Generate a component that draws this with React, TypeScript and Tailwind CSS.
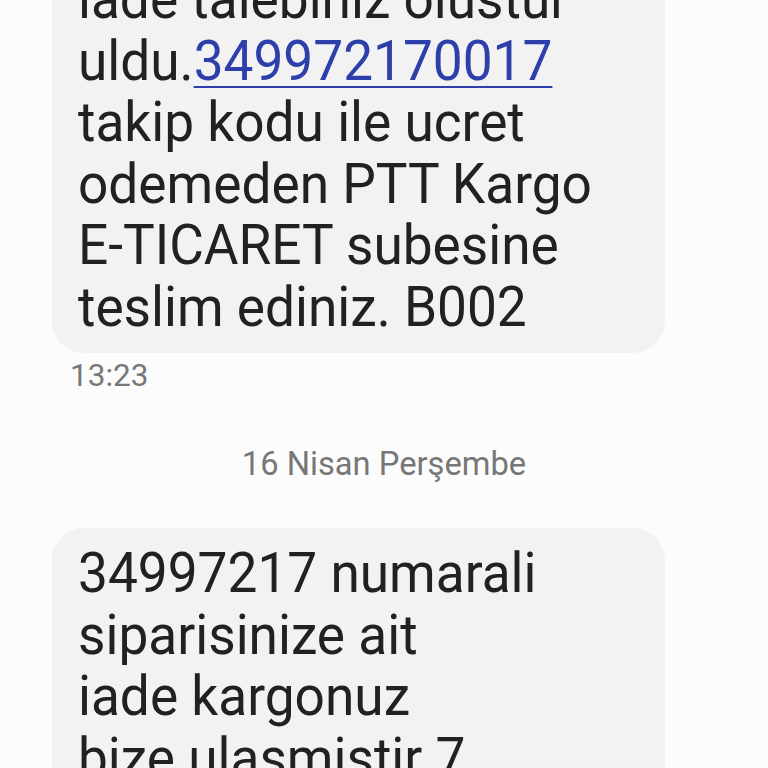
import React from "react";

const Line = ({ children }: { children: React.ReactNode }) => (
  <div className="h-[61.5px] leading-[61.5px] whitespace-nowrap">{children}</div>
);

export default function App() {
  return (
    <div
      className="w-[768px] h-[768px] overflow-hidden bg-[#fcfcfc]"
      style={{ fontFamily: "Roboto, 'Noto Sans', sans-serif" }}
    >
      <div className="-mt-[46px] flex flex-col">
        <div className="ml-[52px] w-[613px] rounded-[32px] bg-[#f2f2f2] pl-[26px] pr-[20px] py-[15px]">
          <div className="origin-left scale-x-[0.95] text-[56px] text-[#212121]">
            <Line>iade talebiniz olustur</Line>
            <Line>
              uldu.
              <span className="text-[#2c3fab] underline decoration-[2px] underline-offset-[6px]">349972170017</span>
            </Line>
            <Line>takip kodu ile ucret</Line>
            <Line>odemeden PTT Kargo</Line>
            <Line>E-TICARET subesine</Line>
            <Line>teslim ediniz. B002</Line>
          </div>
        </div>
        <div className="ml-[70px] mt-[3px] h-[40px] leading-[40px] text-[31.5px] text-[#777777]">13:23</div>
        <div className="mt-[48px] h-[40px] leading-[40px] text-center text-[32.7px] text-[#777777]">16 Nisan Perşembe</div>
        <div className="mt-[44px] ml-[52px] w-[613px] rounded-[32px] bg-[#f2f2f2] pl-[26px] pr-[20px] py-[15px]">
          <div className="origin-left scale-x-[0.95] text-[56px] text-[#212121]">
            <Line>34997217 numarali</Line>
            <Line>siparisinize ait</Line>
            <Line>iade kargonuz</Line>
            <Line>bize ulasmistir 7</Line>
            <Line>is gunu icinde</Line>
          </div>
        </div>
      </div>
    </div>
  );
}
